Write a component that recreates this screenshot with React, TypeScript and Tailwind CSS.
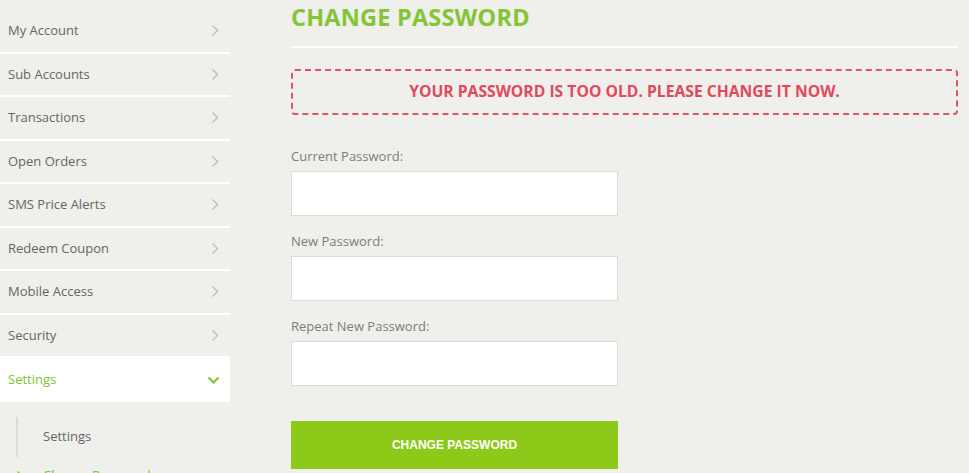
import React from "react";

const menu = [
  "My Account",
  "Sub Accounts",
  "Transactions",
  "Open Orders",
  "SMS Price Alerts",
  "Redeem Coupon",
  "Mobile Access",
  "Security",
];

function ChevronRight({ className = "" }: { className?: string }) {
  return (
    <svg className={className} width="8" height="13" viewBox="0 0 8 13" fill="none" stroke="currentColor" strokeWidth={1.4}>
      <path d="M1.5 1.5 L6.5 6.5 L1.5 11.5" />
    </svg>
  );
}

function ChevronDown({ className = "" }: { className?: string }) {
  return (
    <svg className={className} width="13" height="8" viewBox="0 0 13 8" fill="none" stroke="currentColor" strokeWidth={2}>
      <path d="M1.5 1.5 L6.5 6.5 L11.5 1.5" />
    </svg>
  );
}

function Field({ label }: { label: string }) {
  return (
    <div className="flex flex-col">
      <label className="text-[13px] leading-[18px] text-[#7d7d7d]">{label}</label>
      <input
        type="password"
        className="mt-[6px] h-[45px] w-[327px] border border-[#dcdcd8] bg-white outline-none"
      />
    </div>
  );
}

export default function App() {
  return (
    <div
      className="flex h-[473px] w-[969px] overflow-hidden bg-[#efefeb]"
      style={{ fontFamily: '"Open Sans", "Noto Sans", sans-serif' }}
    >
      {/* Sidebar */}
      <aside className="w-[230px] shrink-0 pt-[10px]">
        {menu.map((item) => (
          <div
            key={item}
            className="flex h-[43.5px] items-center justify-between border-b-2 border-white pl-[8px] pr-[11px]"
          >
            <span className="text-[13px] text-[#666]">{item}</span>
            <ChevronRight className="text-[#bdbdbd]" />
          </div>
        ))}
        <div className="flex h-[44px] items-center justify-between bg-white pl-[8px] pr-[10px]">
          <span className="text-[13px] text-[#7cc52e]">Settings</span>
          <ChevronDown className="text-[#7cc52e]" />
        </div>
        <div className="mt-[15px] flex flex-col">
          <div className="ml-[16px] flex h-[40px] items-center border-l-2 border-[#dcdcd8] pl-[25px]">
            <span className="text-[13px] text-[#666]">Settings</span>
          </div>
          <div className="mt-[4px] flex h-[30px] items-center pl-[16px]">
            <ChevronRight className="text-[#7cc52e]" />
            <span className="ml-[19px] text-[13px] text-[#7cc52e]">Change Password</span>
          </div>
        </div>
      </aside>

      {/* Main */}
      <main className="ml-[61px] w-[667px]">
        <h1 className="pt-[2px] text-[23.5px] font-bold leading-[30px] tracking-[0.2px] text-[#84c536]">
          CHANGE PASSWORD
        </h1>
        <div className="mt-[14px] h-[2px] bg-white" />
        <div className="mt-[21px] flex h-[46px] items-center justify-center rounded-[4px] border-2 border-dashed border-[#e05565]">
          <span className="text-[15.7px] font-bold text-[#e04a5c]">
            YOUR PASSWORD IS TOO OLD. PLEASE CHANGE IT NOW.
          </span>
        </div>
        <div className="mt-[32px] flex flex-col gap-[16px]">
          <Field label="Current Password:" />
          <Field label="New Password:" />
          <Field label="Repeat New Password:" />
        </div>
        <button
          className="mt-[35px] flex h-[48px] w-[327px] items-center justify-center bg-[#8cc919] text-[12px] font-bold text-white"
          style={{ fontFamily: '"Liberation Sans", Arial, sans-serif' }}
        >
          CHANGE PASSWORD
        </button>
      </main>
    </div>
  );
}
